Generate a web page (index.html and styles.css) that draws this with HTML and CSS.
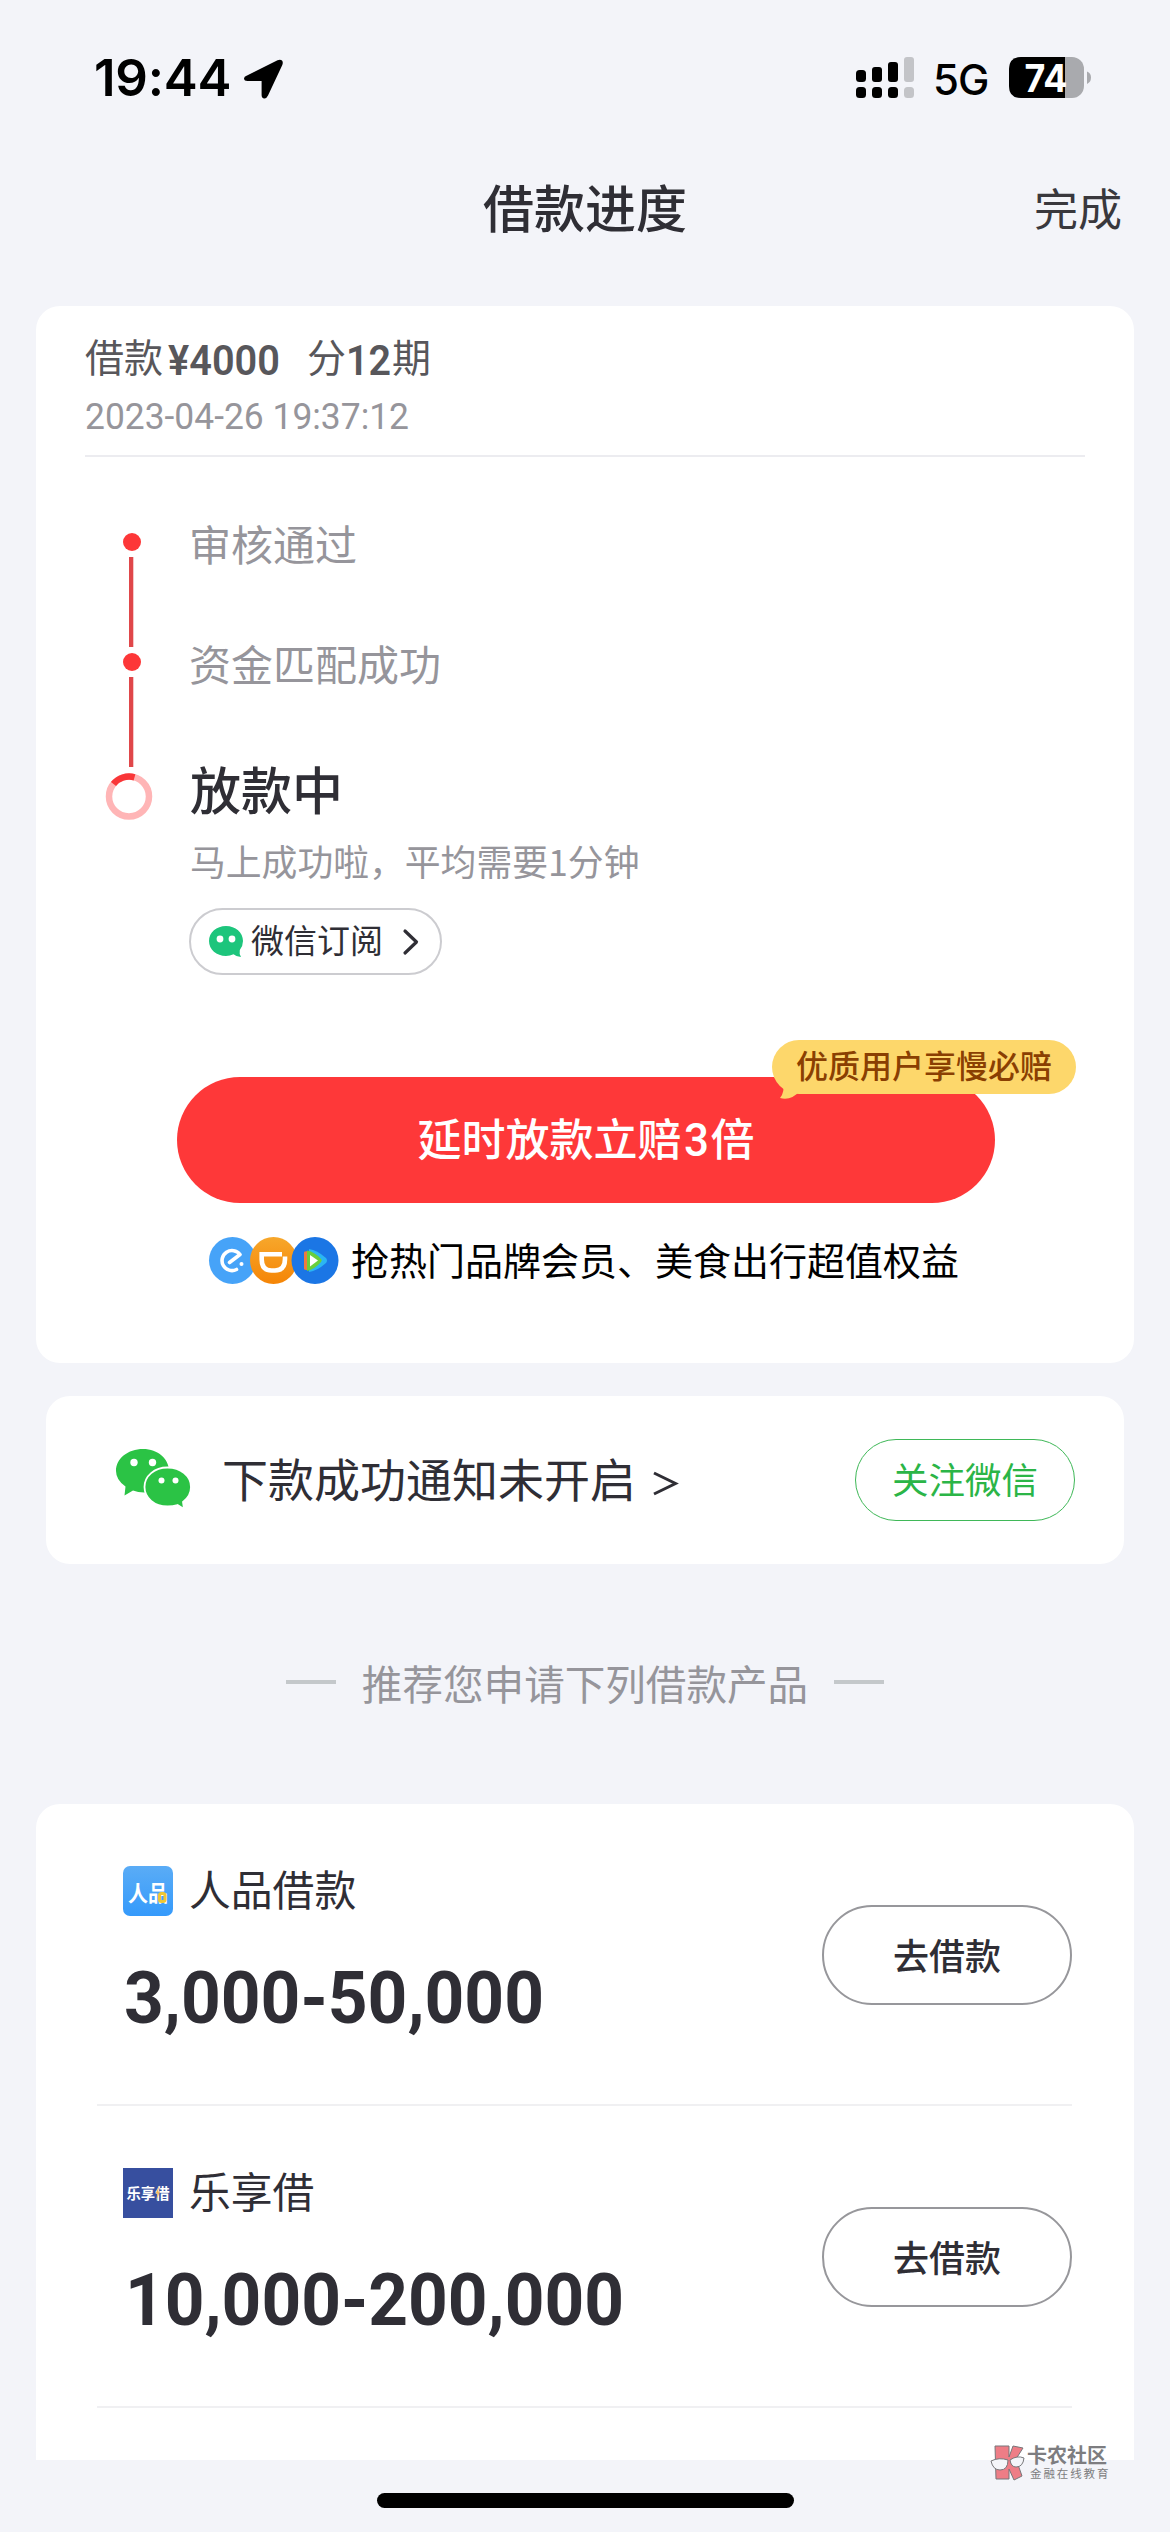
FILE: index.html
```html
<!DOCTYPE html>
<html lang="zh-CN">
<head>
<meta charset="utf-8">
<title>借款进度</title>
<link rel="stylesheet" href="styles.css">
</head>
<body>
<div class="screen">
  <header class="status">
    <span class="time">19:44</span>
    <svg class="locate" width="39" height="40" viewBox="0 0 39 40"><path d="M3 16.500 33.500 1.200Q36.500 0 38 1.600 39.400 3.200 38.300 6L24 36.500Q22.500 39.700 20.300 39.500 17.600 39.200 17.600 36V22H3.500Q.2 22 0 19.500-.1 17.800 3 16.500Z"/></svg>
    <svg class="signal" width="58" height="42" viewBox="0 0 58 42">
      <g><rect y="13" width="10" height="12" rx="3.500"/><rect x="16" y="10" width="10" height="15" rx="3"/><rect x="32" y="5" width="10" height="20" rx="3"/><rect y="30" width="10" height="11" rx="3.500"/><rect x="16" y="30" width="10" height="11" rx="3.500"/><rect x="32" y="30" width="10" height="11" rx="3.500"/></g>
      <g fill="#c3c4c8"><rect x="48" width="10" height="25" rx="3"/><rect x="48" y="30" width="10" height="11" rx="3.500"/></g>
    </svg>
    <span class="net">5G</span>
    <svg class="battery" width="83" height="42" viewBox="0 0 83 42">
      <rect width="75" height="41" rx="12" fill="#a9aaae"/>
      <path d="M12 0H56V41H12Q0 41 0 29V12Q0 0 12 0Z"/>
      <path d="M78 14.500Q82 16 82 20.500T78 27Z" fill="#a9aaae"/>
      <text x="15.500" y="34.500" textLength="43" lengthAdjust="spacingAndGlyphs" class="pct">74</text>
    </svg>
  </header>

  <nav class="nav">
    <h1>借款进度</h1>
    <a class="done">完成</a>
  </nav>

  <main>
    <section class="card progress">
      <div class="loan-head">
        <div class="loan-line"><span>借款</span><svg class="amt" width="112" height="60" viewBox="0 0 112 60"><text x="0" y="49" textLength="112" lengthAdjust="spacingAndGlyphs">¥4000</text></svg><span>分</span><svg class="term" width="44" height="60" viewBox="0 0 44 60"><text x="-1" y="49" textLength="45" lengthAdjust="spacingAndGlyphs">12</text></svg><span>期</span></div>
        <svg class="date" width="330" height="40" viewBox="0 0 330 40"><text x="0" y="33" textLength="324" lengthAdjust="spacingAndGlyphs">2023-04-26 19:37:12</text></svg>
      </div>
      <ol class="steps">
        <li><svg width="48" height="120" viewBox="0 0 48 120"><circle cx="27" cy="9" r="9" fill="#fd3738"/><rect x="24" y="24" width="4.300" height="90" fill="#e0474a"/></svg><span>审核通过</span></li>
        <li><svg width="48" height="120" viewBox="0 0 48 120"><circle cx="27" cy="9" r="9" fill="#fd3738"/><rect x="24" y="24" width="4.300" height="90" fill="#e0474a"/></svg><span>资金匹配成功</span></li>
        <li>
          <svg width="48" height="48" viewBox="0 0 48 48" fill="none" stroke-width="6.500"><circle cx="24" cy="23.500" r="20" stroke="#ffb5b6"/><path d="M8.500 11A20 20 0 0 1 29.500 4.300" stroke="#f93638"/></svg>
          <div class="current">
            <h2>放款中</h2>
            <p>马上成功啦，平均需要1分钟</p>
            <a class="subscribe">
              <svg width="34" height="32" viewBox="0 0 34 32"><path d="M17 0C7.500 0 0 6.500 0 15S7.500 30 17 30Q21 30 24.500 28.300 27.500 31 32 31 30 28 30.800 24 34 20 34 15C34 6.500 26.500 0 17 0Z" fill="#1dc57c"/><circle cx="11" cy="13" r="3.400" fill="#fff"/><circle cx="23" cy="13" r="3.400" fill="#fff"/></svg>
              <span>微信订阅</span>
              <svg width="16" height="26" viewBox="0 0 16 26" fill="none" stroke="#2f2e35" stroke-width="3.200" stroke-linecap="round" stroke-linejoin="round"><path d="M2 2 13.500 13 2 24"/></svg>
            </a>
          </div>
        </li>
      </ol>
      <div class="cta">
        <span>延时放款立赔</span><svg width="29" height="60" viewBox="0 0 29 60"><text x="2" y="46" textLength="25" lengthAdjust="spacingAndGlyphs">3</text></svg><span>倍</span>
        <div class="badge">优质用户享慢必赔<svg width="22" height="18" viewBox="0 0 22 18"><path d="M3 0Q5 10 0 16 11 19 20 9L22 0Z" fill="#fdd76b"/></svg></div>
      </div>
      <div class="perks">
        <svg width="130" height="48" viewBox="0 0 130 48">
          <defs><linearGradient id="or" x2="0" y2="1"><stop stop-color="#f7a72b"/><stop offset="1" stop-color="#f58506"/></linearGradient></defs>
          <circle cx="23.500" cy="23.500" r="23.500" fill="#46a3f8"/>
          <path d="M27.500 32.500A10 10 0 1 1 31 17.500L20.500 25.500" fill="none" stroke="#fff" stroke-width="3.600" stroke-linecap="round" stroke-linejoin="round"/><circle cx="32.500" cy="27" r="2" fill="#fff"/>
          <circle cx="64.500" cy="23.500" r="23.500" fill="url(#or)"/>
          <path d="M73 17.200H52.700V22.500Q52.700 33.500 62.500 33.500H66Q76 33.500 76 22V19.500" fill="none" stroke="#fff" stroke-width="4.600"/>
          <circle cx="106" cy="23.500" r="23.500" fill="#1b76e5"/>
          <path d="M100 12Q108 13 117 21 119 23.500 117 26 108 34 100 35Z" fill="#2bb5f3"/><path d="M95 15.500V31.500Q95 33.500 99 33V14Q95 14 95 15.500Z" fill="#ee7a3f"/><path d="M98 13.500Q106 15 112 22 113.500 23.500 112 25 106 32 98 34Z" fill="#69cf3c"/><path d="M101 18 109 23.500 101 29.500Z" fill="#fff"/>
        </svg>
        <span>抢热门品牌会员、美食出行超值权益</span>
      </div>
    </section>

    <section class="card notice">
      <svg class="wx" width="76" height="62" viewBox="0 0 76 62" fill="#2bc345">
        <path d="M27 0C12 0 0 9.500 0 22Q0 31 9.500 37.500L8.500 46.500 17 41.500Q22 43.500 28 43.500C42 43 53 34 53 22S42 0 27 0Z"/>
        <path d="M51.500 18.500C38.500 18.500 28.500 27 28.500 38S38.500 57.500 51.500 57.500Q57 57.500 61.500 56L68 60 67 53Q75 47 75 38C75 27 64.500 18.500 51.500 18.500Z" stroke="#fff" stroke-width="1.800"/>
        <g fill="#fff"><circle cx="18" cy="13.500" r="3.700"/><circle cx="36.500" cy="13.500" r="3.700"/><circle cx="45.500" cy="31.500" r="3"/><circle cx="59.500" cy="31.500" r="3"/></g>
      </svg>
      <span class="msg">下款成功通知未开启</span>
      <svg class="gt" width="26" height="26" viewBox="0 0 26 26"><path d="M1 2 22.500 12.500 1 23" fill="none" stroke="#2f2e35" stroke-width="3"/></svg>
      <a class="follow">关注微信</a>
    </section>

    <div class="suggest"><i></i><span>推荐您申请下列借款产品</span><i></i></div>

    <section class="card products">
      <article class="product">
        <div>
          <div class="brand">
            <svg width="50" height="50" viewBox="0 0 50 50"><defs><linearGradient id="bl" x2="0" y2="1"><stop stop-color="#5aacf6"/><stop offset="1" stop-color="#359afb"/></linearGradient></defs><rect width="50" height="50" rx="7" fill="url(#bl)"/><text x="5" y="35" class="logo-a" textLength="40" lengthAdjust="spacingAndGlyphs">人品</text><rect x="36.500" y="27.500" width="5.500" height="8" rx="2" fill="none" stroke="#efc733" stroke-width="3"/></svg>
            <span>人品借款</span>
          </div>
          <svg class="sum" width="520" height="90" viewBox="0 0 520 90"><text x="1" y="69" textLength="420" lengthAdjust="spacingAndGlyphs">3,000-50,000</text></svg>
        </div>
        <a class="borrow">去借款</a>
      </article>
      <article class="product">
        <div>
          <div class="brand">
            <svg width="50" height="50" viewBox="0 0 50 50"><rect width="50" height="50" fill="#374f9f"/><text x="3.500" y="31" class="logo-b" textLength="43" lengthAdjust="spacingAndGlyphs">乐享借</text><path d="M36.500 17 32.500 25.500H34.500L33 33 37 23.500H35Z" fill="#f3b65c"/></svg>
            <span>乐享借</span>
          </div>
          <svg class="sum" width="520" height="90" viewBox="0 0 520 90"><text x="2" y="69" textLength="499" lengthAdjust="spacingAndGlyphs">10,000-200,000</text></svg>
        </div>
        <a class="borrow">去借款</a>
      </article>
    </section>
  </main>
  <div class="home"></div>

  <div class="mark">
    <svg width="35" height="36" viewBox="0 0 35 36"><g fill="#ee7d86" stroke="#77777a" stroke-width="1"><path d="M5 1H19V12L23 1 33 3 26 14 32 31 24 35 19 24V34H6Z"/><path d="M1 16Q9 12 18 15 18 25 10 25 3 25 1 16ZM20 15Q27 10 34 13 33 22 26 22 21 22 20 15Z" fill="#f4f5f9"/></g></svg>
    <div><b>卡农社区</b><small>金融在线教育</small></div>
  </div>
</div>
</body>
</html>
```
FILE: styles.css
```css
* { box-sizing: border-box; margin: 0; padding: 0; }
body { background: #f3f4f9; }
svg { display: block; flex: none; overflow: visible; }
.screen {
  position: relative; width: 1170px; height: 2532px; overflow: hidden;
  background: #f3f4f9; color: #2f2e35;
  font-family: "Noto Sans CJK SC", sans-serif;
  white-space: nowrap;
}

.status { display: flex; align-items: center; height: 155px; padding: 0 78px 0 94px; font-family: Inter, sans-serif; color: #000; }
.time { width: 150px; font-size: 51px; font-weight: 600; letter-spacing: -0.2px; }
.locate { margin-top: 2px; }
.signal { margin-left: auto; }
.net { width: 95px; padding-left: 19px; font-size: 42px; font-weight: 500; letter-spacing: -1px; margin-top: 3px; }
.pct { font: 700 38px Inter, sans-serif; fill: #fff; }

.nav { position: relative; display: flex; align-items: center; justify-content: center; height: 102px; }
.nav h1 { font-size: 51px; font-weight: 500; line-height: 76px; }
.done { position: absolute; right: 48px; top: 18px; font-size: 44px; line-height: 68px; color: #39383d; }

.card { margin: 0 36px; background: #fff; border-radius: 24px; }

.progress { height: 1057px; margin-top: 49px; padding: 20px 49px 0; }
.loan-head { height: 131px; border-bottom: 2px solid #ececf0; }
.loan-line { display: flex; align-items: center; height: 60px; font-size: 39px; color: #58575b; }
.loan-line span { margin-top: -3px; }
.loan-line text { font: 600 43px Roboto, sans-serif; fill: #58575b; }
.amt { margin: 0 27px 0 5px; }
.term { margin: 0 1px; }
.date { margin-top: 10px; }
.date text { font: 400 36.500px Roboto, sans-serif; fill: #96959b; }

.steps { list-style: none; padding: 76px 0 0 20px; }
.steps li { display: flex; gap: 37px; height: 120px; font-size: 42px; line-height: 20px; color: #96959b; }
.steps li > span { height: 62px; margin: -21px 0 0 -1px; line-height: 62px; }
.steps li:last-child { height: auto; }
.current { margin-top: -22px; }
.current h2 { font-size: 51px; font-weight: 500; line-height: 74px; color: #2f2e35; }
.current p { margin-top: 8px; font-size: 35.800px; line-height: 54px; }
.subscribe { display: flex; align-items: center; width: 253px; height: 67px; margin: 21px 0 0 -1px; padding-left: 18px; border: 2px solid #ccccd0; border-radius: 34px; font-size: 33px; color: #2f2e35; }
.subscribe span { margin: -6px 20px 0 8px; line-height: 50px; }

.cta { position: relative; display: flex; align-items: center; justify-content: center; width: 818px; height: 126px; margin: 102px 0 0 92px; border-radius: 63px; background: #fe3839; color: #fff; font-size: 44px; font-weight: 500; }
.cta span { margin-top: -6px; }
.cta text { font: 500 47px Roboto, sans-serif; fill: #fff; }
.badge { position: absolute; left: 595px; top: -37px; width: 304px; height: 54px; border-radius: 27px; background: #fdd76b; color: #8a3f02; font-size: 32px; line-height: 49px; text-align: center; }
.badge svg { position: absolute; left: 8px; top: 42px; }
.perks { display: flex; align-items: center; gap: 12px; margin: 34px 0 0 124px; height: 48px; font-size: 38px; color: #000; }
.perks span { margin-top: -5px; }

.notice { display: flex; align-items: center; height: 168px; margin: 33px 46px 0; padding: 0 49px 0 70px; }
.msg { margin: -6px 17px 0 30px; font-size: 46px; }
.gt { margin-top: 7px; }
.follow { width: 220px; height: 82px; margin-left: auto; border: 1.500px solid #3fb858; border-radius: 41px; color: #2bb547; font-size: 36.500px; line-height: 77px; text-align: center; }

.suggest { display: flex; align-items: center; justify-content: center; gap: 26px; height: 240px; padding-bottom: 4px; font-size: 40.600px; color: #96959b; }
.suggest i { width: 50px; height: 4px; background: #c4c8cb; }

.products { height: 656px; padding: 0 62px 0 61px; border-radius: 24px 24px 0 0; }
.product { display: flex; justify-content: space-between; height: 302px; padding: 62px 0 0 26px; border-bottom: 2px solid #f0f0f2; }
.brand { display: flex; align-items: center; gap: 16px; height: 50px; font-size: 41.800px; }
.brand span { margin-top: -6px; }
.sum { margin-top: 38px; }
.sum text { font: 700 73px Roboto, sans-serif; fill: #2f2e35; }
.logo-a { font: 700 22px "Noto Sans CJK SC", sans-serif; fill: #fff; }
.logo-b { font: 700 15px "Noto Sans CJK SC", sans-serif; fill: #fff; }
.borrow { width: 250px; height: 100px; margin-top: 39px; border: 2px solid #97979b; border-radius: 50px; font-size: 36px; font-weight: 500; line-height: 95px; text-align: center; }

.home { width: 417px; height: 15px; margin: 33px auto 0; border-radius: 8px; background: #000; }

.mark { position: absolute; left: 990px; top: 2445px; display: flex; gap: 2px; color: #7d7d80; }
.mark b { display: block; font-size: 20px; font-weight: 700; line-height: 20px; }
.mark small { display: block; margin: 1px 0 0 3px; font-size: 11.500px; line-height: 14px; letter-spacing: 1.900px; }
```
